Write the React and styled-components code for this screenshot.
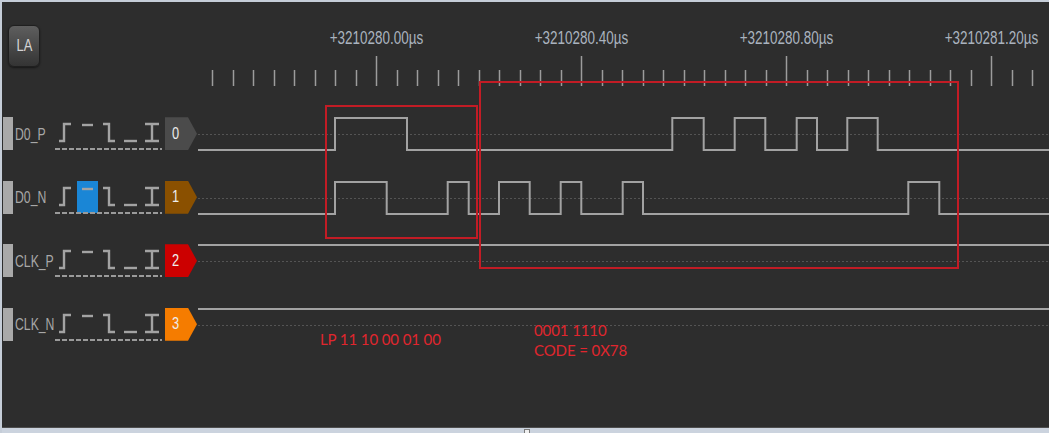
import React from 'react';
import styled, { createGlobalStyle } from 'styled-components';

const GlobalStyle = createGlobalStyle`
  html, body {
    margin: 0;
    padding: 0;
    background: #2d2d2d;
  }
  * {
    box-sizing: border-box;
  }
`;

// no narrow face installed: Arial metrics squeezed sideways
const UI_FONT = `'Liberation Sans', Arial, sans-serif`;
const NOTE_FONT = `Lato, 'Open Sans', sans-serif`;

const PLOT_W = 851;
const HI = 16;
const LO = 48;
const MID = 32;

const channels = [
  { name: 'D0_P', tag: '#4b4b4b', start: 'lo', edges: [137, 209, 474.3, 505.7, 536.7, 567.3, 598.7, 619, 649.3, 679.7] },
  { name: 'D0_N', tag: '#8a5000', start: 'lo', active: 1, edges: [137, 188.7, 249.7, 270.7, 301, 331.7, 362.7, 383.3, 424.7, 445, 710.3, 741.3] },
  { name: 'CLK_P', tag: '#cc0000', start: 'hi', edges: [] },
  { name: 'CLK_N', tag: '#f57c00', start: 'hi', edges: [] },
];

const triggerPaths = [
  'M3 24 H8 V7 H15',
  'M5 8 H16',
  'M5 7 H11 V24 H17',
  'M5 24 H18',
  'M5 7 H19 M12 7 V24 M5 24 H19',
];

const wavePath = (edges, start) => {
  let high = start === 'hi';
  let d = `M0 ${high ? HI : LO}`;
  edges.forEach((x) => {
    high = !high;
    d += ` H${x} V${high ? HI : LO}`;
  });
  return `${d} H${PLOT_W}`;
};

const ticks = Array.from({ length: 41 }, (_, k) => ({ x: 14 + k * 20.5, major: k % 10 === 8 }));
const stamps = ['+3210280.00µs', '+3210280.40µs', '+3210280.80µs', '+3210281.20µs'];

const Frame = styled.div`
  width: 1049px;
  height: 433px;
  display: flex;
  flex-direction: column;
  background: #2d2d2d;
  border-top: 2px solid #c5cdd8;
  border-left: 2px solid #c5cdd8;
  overflow: hidden;
`;

const Main = styled.div`
  flex: 1;
  display: flex;
`;

const Sidebar = styled.div`
  width: 196px;
  flex-shrink: 0;
  display: flex;
  flex-direction: column;
`;

const SideHeader = styled.div`
  height: 100px;
  padding: 23px 0 0 6px;
`;

const LaButton = styled.div`
  width: 32px;
  height: 42px;
  border-radius: 6px;
  border: 1px solid #1f1f1f;
  background: linear-gradient(#5e5e5e, #343434);
  box-shadow: 0 1px 2px rgba(0, 0, 0, 0.5);
  display: flex;
  align-items: center;
  justify-content: center;

  span {
    display: block;
    color: #d4d4d4;
    font: 17px ${UI_FONT};
    transform: scaleX(0.76);
  }
`;

const ChannelRow = styled.div`
  height: 63.5px;
  display: flex;
  align-items: center;
`;

const Grip = styled.div`
  width: 10px;
  height: 33px;
  margin-left: 1px;
  background: #a9a9a9;
`;

const Name = styled.div`
  width: 40px;
  margin-left: 2px;
  padding-top: 2px;
  color: #a8a8a8;
  font: 17px ${UI_FONT};
  white-space: nowrap;
  transform: scaleX(0.72);
  transform-origin: left center;
`;

const Triggers = styled.div`
  position: relative;
  width: 108px;
  height: 33px;
  padding-left: 1px;
  display: flex;

  &::after {
    content: '';
    position: absolute;
    left: 0;
    right: 1px;
    bottom: 0;
    height: 2px;
    background: repeating-linear-gradient(90deg, #9a9a9a 0 5px, transparent 5px 7px);
  }
`;

const TriggerCell = styled.div`
  width: 21px;
  height: 32px;
  background: ${(p) => (p.$active ? '#1a86d6' : 'transparent')};
`;

const Tag = styled.div`
  width: 33px;
  height: 33px;
  margin-left: 2px;
  padding-left: 7px;
  display: flex;
  align-items: center;
  background: ${(p) => p.$color};
  clip-path: polygon(0 0, 23px 0, 32px 50%, 23px 100%, 0 100%);

  span {
    display: block;
    color: #ededed;
    font: 16px ${UI_FONT};
    transform: scaleX(0.8);
    transform-origin: left center;
  }
`;

const Plot = styled.div`
  position: relative;
  flex: 1;
  display: flex;
  flex-direction: column;
`;

const Ruler = styled.div`
  height: 100px;
  padding-top: 26px;
  display: flex;
  flex-direction: column;
  gap: 12px;
`;

const Stamps = styled.div`
  display: flex;
  padding-left: 75.5px;
  height: 16px;
`;

const Stamp = styled.div`
  width: 205px;
  flex-shrink: 0;
  text-align: center;
  line-height: 16px;
  color: #aab3bf;
  font: 17.5px ${UI_FONT};
  transform: scaleX(0.77);
`;

const WaveRow = styled.svg`
  display: block;
  width: ${PLOT_W}px;
  height: 63.5px;
`;

const Marker = styled.div`
  position: absolute;
  left: ${(p) => p.$x}px;
  top: ${(p) => p.$y}px;
  width: ${(p) => p.$w}px;
  height: ${(p) => p.$h}px;
  border: 2px solid #c21c25;
`;

const Note = styled.div`
  position: absolute;
  left: ${(p) => p.$x}px;
  top: ${(p) => p.$y}px;
  color: #e0262e;
  font: 15px ${NOTE_FONT};
  letter-spacing: -0.1px;
  line-height: 20px;
  white-space: nowrap;
`;

const StatusStrip = styled.div`
  position: relative;
  height: 6px;
  flex-shrink: 0;
  border-top: 1px solid #4e4e4e;
  background: #cbd3de;

  &::after {
    content: '';
    position: absolute;
    left: 522px;
    top: 1px;
    width: 4px;
    height: 4px;
    border: 1px solid #7a7a7a;
    background: #f0f0f0;
  }
`;

function TriggerIcon({ d }) {
  return (
    <svg width="21" height="32" viewBox="0 0 21 32">
      <path d={d} fill="none" stroke="#a3a3a3" strokeWidth="2.4" />
    </svg>
  );
}

function Channel({ index, name, tag, active }) {
  return (
    <ChannelRow>
      <Grip />
      <Name>{name}</Name>
      <Triggers>
        {triggerPaths.map((d, i) => (
          <TriggerCell key={i} $active={active === i}>
            <TriggerIcon d={d} />
          </TriggerCell>
        ))}
      </Triggers>
      <Tag $color={tag}>
        <span>{index}</span>
      </Tag>
    </ChannelRow>
  );
}

function Wave({ edges, start }) {
  return (
    <WaveRow viewBox={`0 0 ${PLOT_W} 63.5`}>
      <line x1="0" y1={MID + 0.5} x2={PLOT_W} y2={MID + 0.5} stroke="#545454" strokeWidth="1" strokeDasharray="2 2" />
      <path d={wavePath(edges, start)} fill="none" stroke="#a2a2a2" strokeWidth="2" />
    </WaveRow>
  );
}

export default function App() {
  return (
    <>
      <GlobalStyle />
      <Frame>
        <Main>
          <Sidebar>
            <SideHeader>
              <LaButton>
                <span>LA</span>
              </LaButton>
            </SideHeader>
            {channels.map((c, i) => (
              <Channel key={c.name} index={i} {...c} />
            ))}
          </Sidebar>
          <Plot>
            <Ruler>
              <Stamps>
                {stamps.map((s) => (
                  <Stamp key={s}>{s}</Stamp>
                ))}
              </Stamps>
              <svg width={PLOT_W} height="30">
                {ticks.map((t) => (
                  <line
                    key={t.x}
                    x1={Math.round(t.x) + 0.5}
                    x2={Math.round(t.x) + 0.5}
                    y1={t.major ? 0 : 14}
                    y2="30"
                    stroke="#9c9c9c"
                    strokeWidth="1.5"
                  />
                ))}
              </svg>
            </Ruler>
            {channels.map((c) => (
              <Wave key={c.name} edges={c.edges} start={c.start} />
            ))}
            <Marker $x={127} $y={103} $w={153} $h={134} />
            <Marker $x={281} $y={79} $w={480} $h={188} />
            <Note $x={122} $y={327}>LP 11 10 00 01 00</Note>
            <Note $x={336} $y={318}>
              0001 1110
              <br />
              CODE = 0X78
            </Note>
          </Plot>
        </Main>
        <StatusStrip />
      </Frame>
    </>
  );
}
